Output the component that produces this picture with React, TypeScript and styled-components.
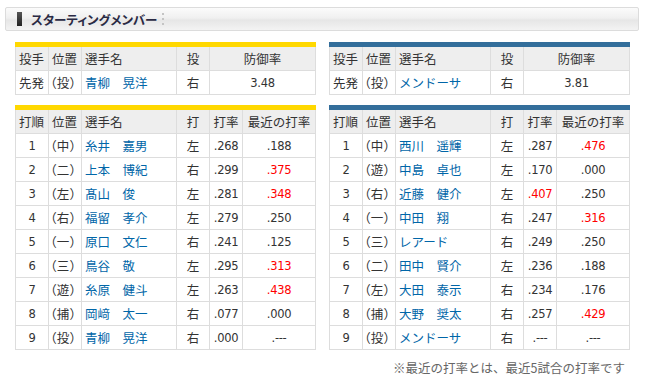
import React from "react";
import styled, { createGlobalStyle } from "styled-components";

const Global = createGlobalStyle`
  html, body { margin: 0; padding: 0; background: #fff; }
  body { font-family: "Noto Sans CJK JP", "Liberation Sans", sans-serif; color: #333; }
`;

const Page = styled.div`
  width: 645px;
  padding: 7px 6px 0 5px;
  box-sizing: border-box;
`;

const TitleBar = styled.div`
  height: 24px;
  box-sizing: border-box;
  border: 1px solid #dcdcdc;
  border-radius: 2px;
  background: linear-gradient(#fbfbfb 0%, #f0f0f0 45%, #e6e6e6 55%, #f3f3f3 100%);
  display: flex;
  align-items: center;
  padding-left: 11px;
`;

const TitleMark = styled.span`
  width: 5px;
  height: 14px;
  background: linear-gradient(#555, #222);
  margin-right: 9px;
`;

const TitleText = styled.h2`
  margin: 0;
  font-size: 12.5px;
  font-weight: bold;
  color: #2a2a44;
  font-feature-settings: "palt";
  letter-spacing: 0px;
`;

const TitleDots = styled.span`
  margin-left: 5px;
  width: 2px;
  height: 13px;
  background: linear-gradient(#c4c4c4 0 2px, transparent 2px 5px) 0 0 / 2px 5px repeat-y;
`;

const Columns = styled.div`
  display: flex;
  gap: 14px;
  padding: 11px 0 0 10px;
`;

const Column = styled.div`
  width: 300px;
  display: flex;
  flex-direction: column;
  gap: 10px;
`;

const Table = styled.table<{ $accent: string }>`
  width: 300px;
  border-collapse: collapse;
  table-layout: fixed;
  border-top: 5px solid ${(p) => p.$accent};
  font-size: 12.5px;
`;

const HeadCell = styled.th<{ $align?: string }>`
  background: #eeeeee;
  border: 1px solid #dddddd;
  border-top: none;
  font-weight: normal;
  height: 23px;
  padding: 0 0 0 3px;
  text-align: ${(p) => p.$align || "left"};
  color: #333;
  white-space: nowrap;
  overflow: hidden;
  ${(p) => (p.$align === "center" ? "padding: 0;" : "")}
`;

const Cell = styled.td<{ $align?: string; $red?: boolean }>`
  border: 1px solid #dddddd;
  height: 23px;
  padding: 0 0 0 3px;
  text-align: ${(p) => p.$align || "left"};
  color: ${(p) => (p.$red ? "#ff0000" : "#333")};
  white-space: nowrap;
  overflow: hidden;
  ${(p) => (p.$align === "center" ? "padding: 0;" : "")}
`;

const PosCell = styled(Cell)`
  padding-left: 1px;
  font-feature-settings: "palt";
  letter-spacing: 0.6px;
`;

const NumCell = styled(Cell)`
  font-family: "DejaVu Sans", sans-serif;
  font-size: 11.5px;
  letter-spacing: -0.3px;
`;

const Name = styled.a`
  color: #0066a8;
  text-decoration: none;
`;

const Note = styled.div`
  text-align: right;
  font-size: 12.5px;
  color: #666;
  margin-top: -2px;
  padding-right: 4px;
`;

type Pitcher = { pos: string; name: string; hand: string; era: string };
type Batter = { pos: string; name: string; hand: string; avg: string; avgRed?: boolean; recent: string; recentRed?: boolean };

const Widths = ({ cols }: { cols: number[] }) => (
  <colgroup>
    {cols.map((w, i) => (
      <col key={i} style={{ width: w }} />
    ))}
  </colgroup>
);

const PitcherTable = ({ accent, p }: { accent: string; p: Pitcher }) => (
  <Table $accent={accent}>
    <Widths cols={[33, 33, 95, 33, 106]} />
    <thead>
      <tr>
        <HeadCell>投手</HeadCell>
        <HeadCell>位置</HeadCell>
        <HeadCell>選手名</HeadCell>
        <HeadCell $align="center">投</HeadCell>
        <HeadCell $align="center">防御率</HeadCell>
      </tr>
    </thead>
    <tbody>
      <tr>
        <Cell>先発</Cell>
        <PosCell>{p.pos}</PosCell>
        <Cell>
          <Name>{p.name}</Name>
        </Cell>
        <Cell $align="center">{p.hand}</Cell>
        <NumCell $align="center">{p.era}</NumCell>
      </tr>
    </tbody>
  </Table>
);

const BattingTable = ({ accent, rows }: { accent: string; rows: Batter[] }) => (
  <Table $accent={accent}>
    <Widths cols={[33, 33, 95, 33, 33, 73]} />
    <thead>
      <tr>
        <HeadCell>打順</HeadCell>
        <HeadCell>位置</HeadCell>
        <HeadCell>選手名</HeadCell>
        <HeadCell $align="center">打</HeadCell>
        <HeadCell $align="center">打率</HeadCell>
        <HeadCell $align="center">最近の打率</HeadCell>
      </tr>
    </thead>
    <tbody>
      {rows.map((r, i) => (
        <tr key={i}>
          <NumCell $align="center">{i + 1}</NumCell>
          <PosCell>{r.pos}</PosCell>
          <Cell>
            <Name>{r.name}</Name>
          </Cell>
          <Cell $align="center">{r.hand}</Cell>
          <NumCell $align="center" $red={r.avgRed}>{r.avg}</NumCell>
          <NumCell $align="center" $red={r.recentRed}>{r.recent}</NumCell>
        </tr>
      ))}
    </tbody>
  </Table>
);

const YELLOW = "#ffd800";
const BLUE = "#336e9b";

const leftBatters: Batter[] = [
  { pos: "（中）", name: "糸井　嘉男", hand: "左", avg: ".268", recent: ".188" },
  { pos: "（二）", name: "上本　博紀", hand: "右", avg: ".299", recent: ".375", recentRed: true },
  { pos: "（左）", name: "髙山　俊", hand: "左", avg: ".281", recent: ".348", recentRed: true },
  { pos: "（右）", name: "福留　孝介", hand: "左", avg: ".279", recent: ".250" },
  { pos: "（一）", name: "原口　文仁", hand: "右", avg: ".241", recent: ".125" },
  { pos: "（三）", name: "鳥谷　敬", hand: "左", avg: ".295", recent: ".313", recentRed: true },
  { pos: "（遊）", name: "糸原　健斗", hand: "左", avg: ".263", recent: ".438", recentRed: true },
  { pos: "（捕）", name: "岡﨑　太一", hand: "右", avg: ".077", recent: ".000" },
  { pos: "（投）", name: "青柳　晃洋", hand: "右", avg: ".000", recent: ".---" },
];

const rightBatters: Batter[] = [
  { pos: "（中）", name: "西川　遥輝", hand: "左", avg: ".287", recent: ".476", recentRed: true },
  { pos: "（遊）", name: "中島　卓也", hand: "左", avg: ".170", recent: ".000" },
  { pos: "（右）", name: "近藤　健介", hand: "左", avg: ".407", avgRed: true, recent: ".250" },
  { pos: "（一）", name: "中田　翔", hand: "右", avg: ".247", recent: ".316", recentRed: true },
  { pos: "（三）", name: "レアード", hand: "右", avg: ".249", recent: ".250" },
  { pos: "（二）", name: "田中　賢介", hand: "左", avg: ".236", recent: ".188" },
  { pos: "（左）", name: "大田　泰示", hand: "右", avg: ".234", recent: ".176" },
  { pos: "（捕）", name: "大野　奨太", hand: "右", avg: ".257", recent: ".429", recentRed: true },
  { pos: "（投）", name: "メンドーサ", hand: "右", avg: ".---", recent: ".---" },
];

export default function App() {
  return (
    <Page>
      <Global />
      <TitleBar>
        <TitleMark />
        <TitleText>スターティングメンバー</TitleText>
        <TitleDots />
      </TitleBar>
      <Columns>
        <Column>
          <PitcherTable accent={YELLOW} p={{ pos: "（投）", name: "青柳　晃洋", hand: "右", era: "3.48" }} />
          <BattingTable accent={YELLOW} rows={leftBatters} />
        </Column>
        <Column>
          <PitcherTable accent={BLUE} p={{ pos: "（投）", name: "メンドーサ", hand: "右", era: "3.81" }} />
          <BattingTable accent={BLUE} rows={rightBatters} />
          <Note>※最近の打率とは、最近5試合の打率です</Note>
        </Column>
      </Columns>
    </Page>
  );
}
